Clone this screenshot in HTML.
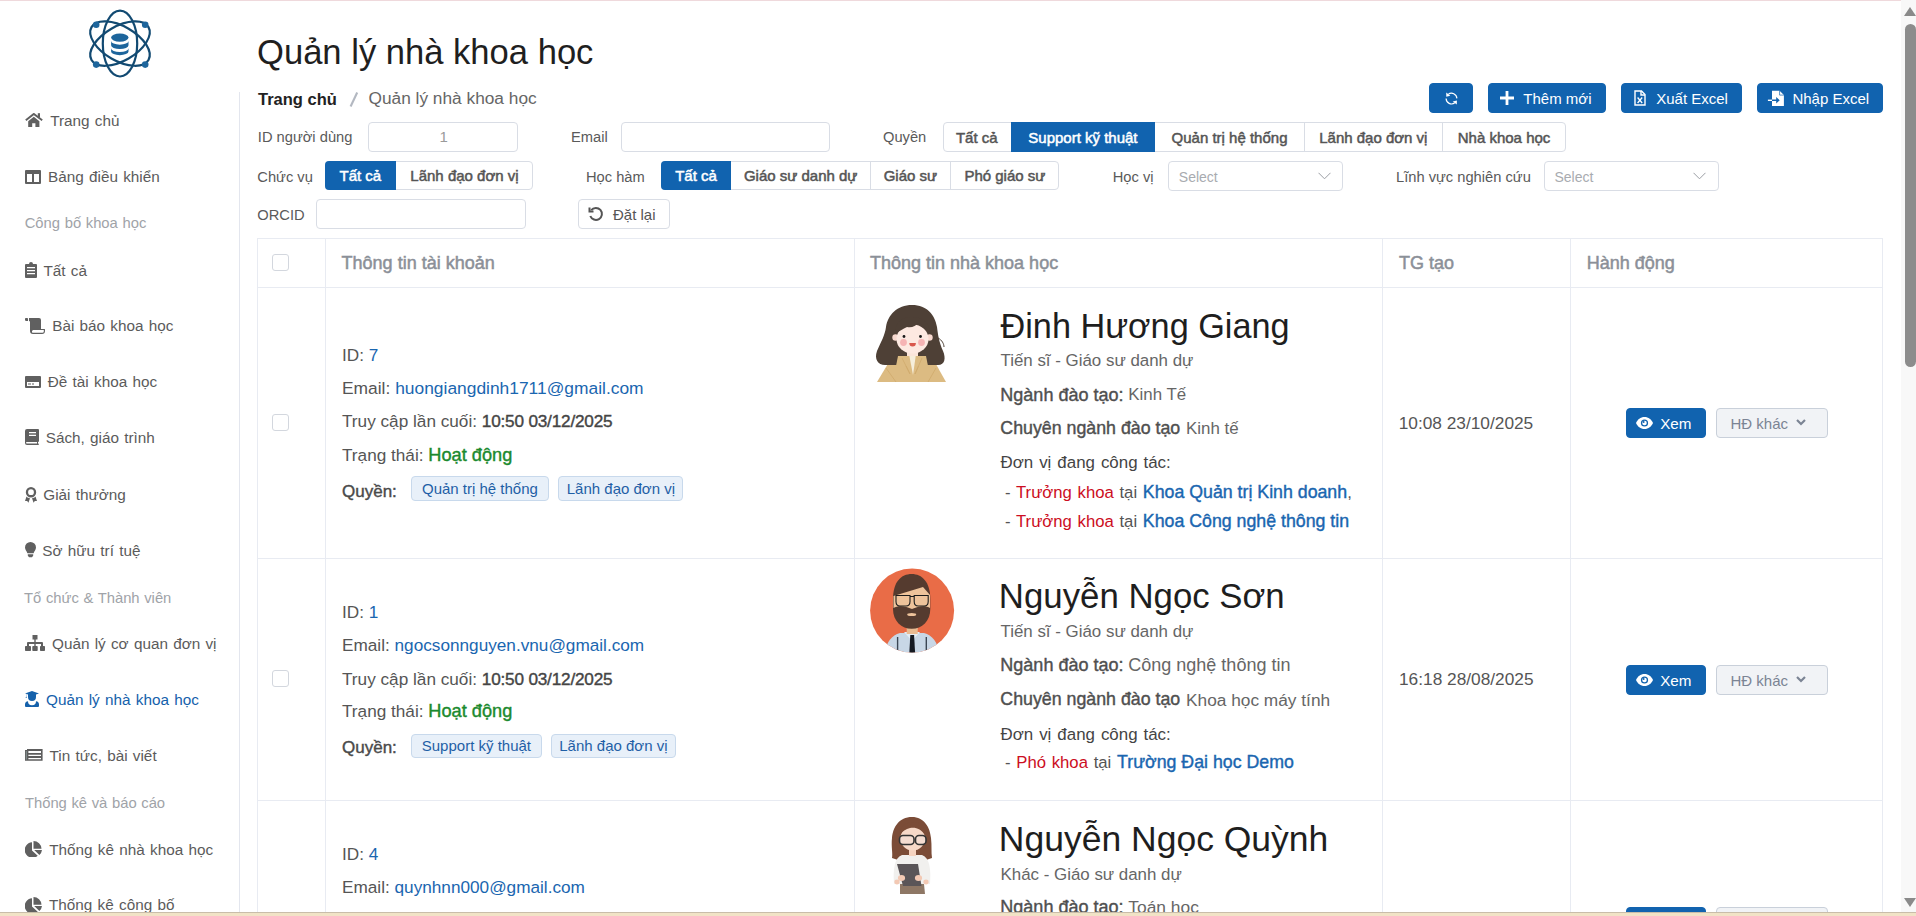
<!DOCTYPE html>
<html><head><meta charset="utf-8"><title>Quản lý nhà khoa học</title>
<style>
html,body{margin:0;padding:0;background:#fff;overflow:hidden}
body{width:1916px;height:916px;position:relative;font-family:"Liberation Sans",sans-serif}
.t{position:absolute;line-height:1;white-space:nowrap}
b{font-weight:700}
</style></head><body>
<div style="position:absolute;left:0px;top:0px;width:1916px;height:1px;background:#efd9dc"></div>
<div style="position:absolute;left:239px;top:92px;width:1px;height:820px;background:#e3e6ee"></div>
<svg style="position:absolute;left:80px;top:3px" width="80" height="82" viewBox="0 0 80 82">
<g fill="none" stroke="#124a72" stroke-width="2.2" transform="translate(40,40.6)">
<ellipse rx="17.2" ry="32.9"/>
<ellipse rx="17.2" ry="32.9" transform="rotate(60)"/>
<ellipse rx="17.2" ry="32.9" transform="rotate(-60)"/>
</g>
<g fill="#1d659c">
<circle cx="16.2" cy="21.8" r="3.3"/><circle cx="65.2" cy="21.8" r="3.3"/>
<circle cx="16.2" cy="61.6" r="3.3"/><circle cx="65.2" cy="61.6" r="3.3"/>
<ellipse cx="39.8" cy="34.6" rx="8.7" ry="4.2"/>
<path d="M31.1 37.9 v4.4 a8.7 3.8 0 0 0 17.4 0 v-4.4 a8.7 3.8 0 0 1 -17.4 0z"/>
<path d="M31.1 45.2 v3.2 a8.7 3.8 0 0 0 17.4 0 v-3.2 a8.7 3.8 0 0 1 -17.4 0z"/>
</g></svg>
<svg style="position:absolute;left:25px;top:113px" width="18" height="15" viewBox="0 0 18 15"><path d="M0.8 7.2L8.8 0.9L17.2 7.2" fill="none" stroke="#606060" stroke-width="1.9"/><rect x="12.8" y="0.2" width="2.2" height="4.2" fill="#606060"/><path d="M3.2 8.2L8.8 3.8L14.4 8.2V14H10.4V10.2H7.2V14H3.2z" fill="#606060"/></svg>
<svg style="position:absolute;left:25px;top:170px" width="16" height="14" viewBox="0 0 16 14" fill="#606060"><path d="M1 0h14a1 1 0 0 1 1 1v12a1 1 0 0 1-1 1H1a1 1 0 0 1-1-1V1a1 1 0 0 1 1-1zM2 4v8h5V4zM9 4v8h5V4z"/></svg>
<svg style="position:absolute;left:25px;top:262px" width="12" height="16" viewBox="0 0 12 16" fill="#606060"><path d="M1 2h3a2 2 0 0 1 4 0h3a1 1 0 0 1 1 1v12a1 1 0 0 1-1 1H1a1 1 0 0 1-1-1V3a1 1 0 0 1 1-1zM2 5v1.3h8V5zM2 8v1.3h8V8zM2 11v1.3h8V11z"/></svg>
<svg style="position:absolute;left:25px;top:318px" width="20" height="16" viewBox="0 0 20 16" fill="#606060"><path d="M0 1.2a1.5 1.5 0 0 1 3 0V3H1.5A1.5 1.5 0 0 1 0 1.2zM4 0h10a2 2 0 0 1 2 2v9h3.5a.5.5 0 0 1 .5.5V13a3 3 0 0 1-3 3H8a3 3 0 0 1-3-3V3.5L4 3zM7 13v1.3c.4.4.8.5 1.2.5h9.3a1.6 1.6 0 0 0 1.3-1.3V12H8z"/></svg>
<svg style="position:absolute;left:25px;top:376px" width="16" height="12" viewBox="0 0 16 12" fill="#606060"><path d="M1 0h14a1 1 0 0 1 1 1v10a1 1 0 0 1-1 1H1a1 1 0 0 1-1-1V1a1 1 0 0 1 1-1zM2 6v4h12V6zM3 7.5h3v1H3zM7 7.5h2v1H7z"/></svg>
<svg style="position:absolute;left:25px;top:429px" width="14" height="16" viewBox="0 0 14 16" fill="#606060"><path d="M2 0h11a1 1 0 0 1 1 1v11a1 1 0 0 1-1 1v1.5h.2a.5.5 0 0 1 0 1.5H2a2 2 0 0 1-2-2V2a2 2 0 0 1 2-2zM1.8 13a.8.8 0 0 0 0 1.6H12V13zM4 3v1.3h7V3zM4 5.8v1.3h7V5.8z"/></svg>
<svg style="position:absolute;left:25px;top:487px" width="12" height="16" viewBox="0 0 12 16" fill="#606060"><path d="M6 0a5.2 5.2 0 1 1 0 10.4A5.2 5.2 0 0 1 6 0zm0 2.3a2.9 2.9 0 1 0 0 5.8a2.9 2.9 0 0 0 0-5.8zM1.5 9.5L0 14h2.2l1.2 1.8L5 11.3c-1.5-.2-2.7-.9-3.5-1.8zM10.5 9.5L12 14H9.8l-1.2 1.8L7 11.3c1.5-.2 2.7-.9 3.5-1.8z"/></svg>
<svg style="position:absolute;left:25px;top:542px" width="11" height="16" viewBox="0 0 11 16" fill="#606060"><path d="M5.5 0A5.5 5.5 0 0 1 11 5.5c0 2.4-1.8 3.7-2.4 5.7H2.4C1.8 9.2 0 7.9 0 5.5A5.5 5.5 0 0 1 5.5 0zM2.8 12.2h5.4v1.3a.8.8 0 0 1-.3.6l-.7.8c-.2.2-.4.3-.7.3H4.5c-.3 0-.5-.1-.7-.3l-.7-.8a.8.8 0 0 1-.3-.6z"/></svg>
<svg style="position:absolute;left:25px;top:635px" width="20" height="16" viewBox="0 0 20 16" fill="#606060"><path d="M7.5 0h5v4.5h-1.8V7H17a1 1 0 0 1 1 1v3h1.2a.8.8 0 0 1 .8.8v3.4a.8.8 0 0 1-.8.8h-3.4a.8.8 0 0 1-.8-.8v-3.4a.8.8 0 0 1 .8-.8H16V9h-5.3v2h1.2a.8.8 0 0 1 .8.8v3.4a.8.8 0 0 1-.8.8H8.1a.8.8 0 0 1-.8-.8v-3.4a.8.8 0 0 1 .8-.8h1.2V9H4v2h1.2a.8.8 0 0 1 .8.8v3.4a.8.8 0 0 1-.8.8H.8a.8.8 0 0 1-.8-.8v-3.4a.8.8 0 0 1 .8-.8H2V8a1 1 0 0 1 1-1h6.3V4.5H7.5z"/></svg>
<svg style="position:absolute;left:25px;top:691px" width="14" height="16" viewBox="0 0 14 16" fill="#1561ab"><path d="M7 0l7 2.4-3 1V6a4 4 0 0 1-8 0V3.4L1.3 2.8v2.8l.5 1.4H.6l.5-1.4V2.7L0 2.4zM3 10.2a3.3 3.3 0 0 0 8 0A3.4 3.4 0 0 1 14 13.6V15a1 1 0 0 1-1 1H1a1 1 0 0 1-1-1v-1.4a3.4 3.4 0 0 1 3-3.4z"/></svg>
<svg style="position:absolute;left:25px;top:749px" width="18" height="12" viewBox="0 0 18 12"><path d="M2 0H17.6V11.8H0V1H2z" fill="#5e5e5e"/><path d="M3.4 2.1H16V3.9H3.4zM3.4 5.8H16V7.1H3.4zM3.4 8.9H16V10.2H3.4z" fill="#fff"/><path d="M1.3 2V10.6" stroke="#9aa" stroke-width="0.7"/></svg>
<svg style="position:absolute;left:25px;top:841px" width="17" height="16" viewBox="0 0 17 16" fill="#606060"><path d="M7 1.2v8.3l5.7 5.3A7.8 7.8 0 1 1 7 1.2zM8.5 0A8 8 0 0 1 16.5 7.7H8.5zM9.2 9h7.8a8 8 0 0 1-2.6 5z"/></svg>
<svg style="position:absolute;left:25px;top:897px" width="17" height="16" viewBox="0 0 17 16" fill="#606060"><path d="M7 1.2v8.3l5.7 5.3A7.8 7.8 0 1 1 7 1.2zM8.5 0A8 8 0 0 1 16.5 7.7H8.5zM9.2 9h7.8a8 8 0 0 1-2.6 5z"/></svg>
<div class="t" style="left:50.2px;top:113.35px;font-size:15.3px;color:#5b5b5b;font-weight:400;word-spacing:1px;">Trang chủ</div>
<div class="t" style="left:48.0px;top:168.75px;font-size:15.3px;color:#5b5b5b;font-weight:400;word-spacing:1px;">Bảng điều khiển</div>
<div class="t" style="left:43.5px;top:262.75px;font-size:15.3px;color:#5b5b5b;font-weight:400;word-spacing:1px;">Tất cả</div>
<div class="t" style="left:52.2px;top:318.45px;font-size:15.3px;color:#5b5b5b;font-weight:400;word-spacing:1px;">Bài báo khoa học</div>
<div class="t" style="left:47.8px;top:374.05px;font-size:15.3px;color:#5b5b5b;font-weight:400;word-spacing:1px;">Đề tài khoa học</div>
<div class="t" style="left:45.7px;top:429.85px;font-size:15.3px;color:#5b5b5b;font-weight:400;word-spacing:1px;">Sách, giáo trình</div>
<div class="t" style="left:43.3px;top:486.95px;font-size:15.3px;color:#5b5b5b;font-weight:400;word-spacing:1px;">Giải thưởng</div>
<div class="t" style="left:42.3px;top:542.75px;font-size:15.3px;color:#5b5b5b;font-weight:400;word-spacing:1px;">Sở hữu trí tuệ</div>
<div class="t" style="left:52.0px;top:636.25px;font-size:15.3px;color:#5b5b5b;font-weight:400;word-spacing:1px;">Quản lý cơ quan đơn vị</div>
<div class="t" style="left:49.6px;top:747.75px;font-size:15.3px;color:#5b5b5b;font-weight:400;word-spacing:1px;">Tin tức, bài viết</div>
<div class="t" style="left:49.2px;top:841.65px;font-size:15.3px;color:#5b5b5b;font-weight:400;word-spacing:1px;">Thống kê nhà khoa học</div>
<div class="t" style="left:49.0px;top:897.05px;font-size:15.3px;color:#5b5b5b;font-weight:400;word-spacing:1px;">Thống kê công bố</div>
<div class="t" style="left:46.0px;top:692.05px;font-size:15.3px;color:#1561ab;font-weight:400;word-spacing:1px;">Quản lý nhà khoa học</div>
<div class="t" style="left:24.7px;top:216.07px;font-size:14.8px;color:#a0a3a8;font-weight:400;word-spacing:0.5px;">Công bố khoa học</div>
<div class="t" style="left:24.0px;top:591.07px;font-size:14.8px;color:#a0a3a8;font-weight:400;word-spacing:0.5px;">Tổ chức &amp; Thành viên</div>
<div class="t" style="left:24.9px;top:795.97px;font-size:14.8px;color:#a0a3a8;font-weight:400;word-spacing:0.5px;">Thống kê và báo cáo</div>
<div class="t" style="left:257.0px;top:35.31px;font-size:34.6px;color:#1f1f1f;font-weight:400;">Quản lý nhà khoa học</div>
<div class="t" style="left:258.0px;top:91.03px;font-size:16.5px;color:#222;font-weight:700;">Trang chủ</div>
<svg style="position:absolute;left:348px;top:91px" width="11" height="17" viewBox="0 0 11 17"><path d="M9.2 1.5L2.6 15.5" stroke="#b3b8c1" stroke-width="2.1" stroke-linecap="butt"/></svg>
<div class="t" style="left:368.5px;top:90.36px;font-size:17.3px;color:#666;font-weight:400;">Quản lý nhà khoa học</div>
<div style="position:absolute;left:1429px;top:83px;width:44px;height:30px;background:#1163af;border:1px solid #1163af;box-sizing:border-box;border-radius:4px"></div>
<svg style="position:absolute;left:1436px;top:86px" width="30" height="24" viewBox="0 0 30 24"><g fill="none" stroke="#fff" stroke-width="1.2"><path d="M12.2 8.4A5.4 5.4 0 0 1 20.9 12.4"/><path d="M10.1 12.6A5.4 5.4 0 0 0 18.8 16.8"/></g><g fill="#fff"><path d="M10.2 6.6L14.3 9.8L10.3 10.8z"/><path d="M20.8 18.6L16.7 15.4L20.9 14.4z"/></g></svg>
<div style="position:absolute;left:1488px;top:83px;width:118px;height:30px;background:#1163af;border:1px solid #1163af;box-sizing:border-box;border-radius:4px"></div>
<svg style="position:absolute;left:1500px;top:91px" width="14" height="14" viewBox="0 0 14 14" fill="#fff"><path d="M5.6 0h2.8v5.6H14v2.8H8.4V14H5.6V8.4H0V5.6h5.6z"/></svg>
<div class="t" style="left:1523.3px;top:91.40px;font-size:15px;color:#fff;font-weight:400;font-family:"Liberation Sans",sans-serif;">Thêm mới</div>
<div style="position:absolute;left:1621px;top:83px;width:121px;height:30px;background:#1163af;border:1px solid #1163af;box-sizing:border-box;border-radius:4px"></div>
<svg style="position:absolute;left:1634px;top:90px" width="12" height="16" viewBox="0 0 12 16" fill="none" stroke="#fff" stroke-width="1.4"><path d="M1 1h6.5L11 4.5V15H1z"/><path d="M7 1v4h4"/><path d="M3.6 7.5l4.6 5.5M8.2 7.5l-4.6 5.5" stroke-width="1.3"/></svg>
<div class="t" style="left:1656.2px;top:91.40px;font-size:15px;color:#fff;font-weight:400;">Xuất Excel</div>
<div style="position:absolute;left:1757px;top:83px;width:126px;height:30px;background:#1163af;border:1px solid #1163af;box-sizing:border-box;border-radius:4px"></div>
<svg style="position:absolute;left:1764px;top:86px" width="26" height="24" viewBox="0 0 26 24"><path d="M8 4.7h7.6l4.3 4.3V19.9H8z" fill="#fff"/><path d="M15.6 4.7V9.1H19.9" fill="none" stroke="#1163af" stroke-width="0.7"/><path d="M8 13.6h4.2V11l3.5 3.3-3.5 3.3v-2.6H8z" fill="#1163af"/><path d="M3.9 13.6h4.1v1.4H3.9z" fill="#fff"/></svg>
<div class="t" style="left:1792.4px;top:91.40px;font-size:15px;color:#fff;font-weight:400;">Nhập Excel</div>
<div class="t" style="left:257.8px;top:130.36px;font-size:14.7px;color:#5a5a5a;font-weight:400;">ID người dùng</div>
<div style="position:absolute;left:368px;top:122px;width:150px;height:30px;background:#fff;border:1px solid #d9dde5;box-sizing:border-box;border-radius:4px"></div>
<div class="t" style="left:439.5px;top:129.30px;font-size:15px;color:#9a9a9a;font-weight:400;">1</div>
<div class="t" style="left:571.0px;top:130.36px;font-size:14.7px;color:#5a5a5a;font-weight:400;">Email</div>
<div style="position:absolute;left:621px;top:122px;width:209px;height:30px;background:#fff;border:1px solid #d9dde5;box-sizing:border-box;border-radius:4px"></div>
<div class="t" style="left:883.0px;top:130.36px;font-size:14.7px;color:#5a5a5a;font-weight:400;">Quyền</div>
<div style="position:absolute;left:942.5px;top:122px;width:623.2px;height:30px;background:#fff;border:1px solid #d9dde5;box-sizing:border-box;border-radius:4px"></div>
<div class="t" style="left:942.5px;width:68.5px;text-align:center;top:129.50px;font-size:15px;font-weight:400;-webkit-text-stroke:0.5px #555;color:#555">Tất cả</div>
<div style="position:absolute;left:1011px;top:122px;width:143.79999999999995px;height:30px;background:#1163af;"></div>
<div class="t" style="left:1011px;width:143.79999999999995px;text-align:center;top:129.50px;font-size:15px;font-weight:400;-webkit-text-stroke:0.5px #fff;color:#fff">Support kỹ thuật</div>
<div class="t" style="left:1154.8px;width:149.5px;text-align:center;top:129.50px;font-size:15px;font-weight:400;-webkit-text-stroke:0.5px #555;color:#555">Quản trị hệ thống</div>
<div style="position:absolute;left:1304.3px;top:123px;width:1px;height:28px;background:#d9dde5"></div>
<div class="t" style="left:1304.3px;width:138.10000000000014px;text-align:center;top:129.50px;font-size:15px;font-weight:400;-webkit-text-stroke:0.5px #555;color:#555">Lãnh đạo đơn vị</div>
<div style="position:absolute;left:1442.4px;top:123px;width:1px;height:28px;background:#d9dde5"></div>
<div class="t" style="left:1442.4px;width:123.29999999999995px;text-align:center;top:129.50px;font-size:15px;font-weight:400;-webkit-text-stroke:0.5px #555;color:#555">Nhà khoa học</div>
<div class="t" style="left:257.3px;top:170.16px;font-size:14.7px;color:#5a5a5a;font-weight:400;">Chức vụ</div>
<div style="position:absolute;left:325px;top:161px;width:208.29999999999995px;height:29px;background:#fff;border:1px solid #d9dde5;box-sizing:border-box;border-radius:4px"></div>
<div style="position:absolute;left:325px;top:161px;width:70.69999999999999px;height:29px;background:#1163af;border-radius:4px 0 0 4px;"></div>
<div class="t" style="left:325px;width:70.69999999999999px;text-align:center;top:168.00px;font-size:15px;font-weight:400;-webkit-text-stroke:0.5px #fff;color:#fff">Tất cả</div>
<div class="t" style="left:395.7px;width:137.59999999999997px;text-align:center;top:168.00px;font-size:15px;font-weight:400;-webkit-text-stroke:0.5px #555;color:#555">Lãnh đạo đơn vị</div>
<div class="t" style="left:586.0px;top:170.16px;font-size:14.7px;color:#5a5a5a;font-weight:400;">Học hàm</div>
<div style="position:absolute;left:661.2px;top:161px;width:398.20000000000005px;height:29px;background:#fff;border:1px solid #d9dde5;box-sizing:border-box;border-radius:4px"></div>
<div style="position:absolute;left:661.2px;top:161px;width:69.69999999999993px;height:29px;background:#1163af;border-radius:4px 0 0 4px;"></div>
<div class="t" style="left:661.2px;width:69.69999999999993px;text-align:center;top:168.00px;font-size:15px;font-weight:400;-webkit-text-stroke:0.5px #fff;color:#fff">Tất cả</div>
<div class="t" style="left:730.9px;width:139.5px;text-align:center;top:168.00px;font-size:15px;font-weight:400;-webkit-text-stroke:0.5px #555;color:#555">Giáo sư danh dự</div>
<div style="position:absolute;left:870.4px;top:162px;width:1px;height:27px;background:#d9dde5"></div>
<div class="t" style="left:870.4px;width:79.89999999999998px;text-align:center;top:168.00px;font-size:15px;font-weight:400;-webkit-text-stroke:0.5px #555;color:#555">Giáo sư</div>
<div style="position:absolute;left:950.3px;top:162px;width:1px;height:27px;background:#d9dde5"></div>
<div class="t" style="left:950.3px;width:109.10000000000014px;text-align:center;top:168.00px;font-size:15px;font-weight:400;-webkit-text-stroke:0.5px #555;color:#555">Phó giáo sư</div>
<div class="t" style="left:1112.7px;top:170.16px;font-size:14.7px;color:#5a5a5a;font-weight:400;">Học vị</div>
<div style="position:absolute;left:1168px;top:161px;width:175px;height:30px;background:#fff;border:1px solid #d9dde5;box-sizing:border-box;border-radius:4px"></div>
<div class="t" style="left:1178.8px;top:169.65px;font-size:14px;color:#a8abb0;font-weight:400;">Select</div>
<svg style="position:absolute;left:1318px;top:172px" width="13" height="8" viewBox="0 0 13 8" fill="none" stroke="#9a9da3" stroke-width="1"><path d="M.5.8l6 6 6-6"/></svg>
<div class="t" style="left:1396.0px;top:170.16px;font-size:14.7px;color:#5a5a5a;font-weight:400;">Lĩnh vực nghiên cứu</div>
<div style="position:absolute;left:1544px;top:161px;width:175px;height:30px;background:#fff;border:1px solid #d9dde5;box-sizing:border-box;border-radius:4px"></div>
<div class="t" style="left:1554.4px;top:169.65px;font-size:14px;color:#a8abb0;font-weight:400;">Select</div>
<svg style="position:absolute;left:1693px;top:172px" width="13" height="8" viewBox="0 0 13 8" fill="none" stroke="#9a9da3" stroke-width="1"><path d="M.5.8l6 6 6-6"/></svg>
<div class="t" style="left:257.3px;top:207.76px;font-size:14.7px;color:#5a5a5a;font-weight:400;">ORCID</div>
<div style="position:absolute;left:316px;top:199px;width:210px;height:30px;background:#fff;border:1px solid #d9dde5;box-sizing:border-box;border-radius:4px"></div>
<div style="position:absolute;left:578px;top:199px;width:92px;height:30px;background:#fff;border:1px solid #d9dde5;box-sizing:border-box;border-radius:4px"></div>
<svg style="position:absolute;left:588px;top:206px" width="16" height="16" viewBox="0 0 16 16" fill="none" stroke="#555" stroke-width="2"><path d="M3.2 4.2A6 6 0 1 1 2.3 10"/><path d="M1.5 1.5v4h4" stroke-linejoin="miter"/></svg>
<div class="t" style="left:613.0px;top:207.20px;font-size:15px;color:#555;font-weight:400;">Đặt lại</div>
<div style="position:absolute;left:257px;top:238px;width:1626px;height:674px;border:1px solid #e8ebf2;border-bottom:none;box-sizing:border-box"></div>
<div style="position:absolute;left:257px;top:287px;width:1626px;height:1px;background:#e8ebf2"></div>
<div style="position:absolute;left:257px;top:558px;width:1626px;height:1px;background:#e8ebf2"></div>
<div style="position:absolute;left:257px;top:800px;width:1626px;height:1px;background:#e8ebf2"></div>
<div style="position:absolute;left:325px;top:238px;width:1px;height:674px;background:#e8ebf2"></div>
<div style="position:absolute;left:854px;top:238px;width:1px;height:674px;background:#e8ebf2"></div>
<div style="position:absolute;left:1382px;top:238px;width:1px;height:674px;background:#e8ebf2"></div>
<div style="position:absolute;left:1570px;top:238px;width:1px;height:674px;background:#e8ebf2"></div>
<div class="t" style="left:341.6px;top:253.56px;font-size:18px;color:#8b9098;font-weight:400;-webkit-text-stroke:0.5px currentColor;">Thông tin tài khoản</div>
<div class="t" style="left:870.0px;top:253.56px;font-size:18px;color:#8b9098;font-weight:400;-webkit-text-stroke:0.5px currentColor;">Thông tin nhà khoa học</div>
<div class="t" style="left:1399.0px;top:253.56px;font-size:18px;color:#8b9098;font-weight:400;-webkit-text-stroke:0.5px currentColor;">TG tạo</div>
<div class="t" style="left:1586.8px;top:253.56px;font-size:18px;color:#8b9098;font-weight:400;-webkit-text-stroke:0.5px currentColor;">Hành động</div>
<div style="position:absolute;left:272px;top:254px;width:17px;height:17px;border:1px solid #d3d7de;border-radius:3px;box-sizing:border-box;background:#fff"></div>
<div class="t" style="left:342.0px;top:347.44px;font-size:17.2px;color:#555;font-weight:400;">ID: <span style="color:#1a66b0">7</span></div>
<div class="t" style="left:342.0px;top:380.27px;font-size:17.4px;color:#555;font-weight:400;">Email: <span style="color:#1a66b0">huongiangdinh1711@gmail.com</span></div>
<div class="t" style="left:342.0px;top:412.64px;font-size:17.2px;color:#555;font-weight:400;">Truy cập lần cuối: <span style="color:#454545;letter-spacing:-0.2px;line-height:0;-webkit-text-stroke:0.4px #454545">10:50 03/12/2025</span></div>
<div class="t" style="left:342.0px;top:447.04px;font-size:17.2px;color:#555;font-weight:400;">Trạng thái: <span style="color:#1b8a2e;font-size:18.2px;line-height:0;-webkit-text-stroke:0.4px #1b8a2e">Hoạt động</span></div>
<div class="t" style="left:342.0px;top:482.81px;font-size:17px;color:#4a4a4a;font-weight:400;-webkit-text-stroke:0.4px #4a4a4a;">Quyền:</div>
<div style="position:absolute;left:411.3px;top:476.4px;width:137.3px;height:24.2px;background:#e8f0f9;border:1px solid #c8d9ec;border-radius:4px;box-sizing:border-box"></div>
<div class="t" style="left:411.3px;width:137.3px;text-align:center;top:481.10px;font-size:15px;color:#1f5fa6">Quản trị hệ thống</div>
<div style="position:absolute;left:558.3px;top:476.4px;width:125.20000000000005px;height:24.2px;background:#e8f0f9;border:1px solid #c8d9ec;border-radius:4px;box-sizing:border-box"></div>
<div class="t" style="left:558.3px;width:125.20000000000005px;text-align:center;top:481.10px;font-size:15px;color:#1f5fa6">Lãnh đạo đơn vị</div>
<div style="position:absolute;left:272px;top:414px;width:17px;height:17px;border:1px solid #d3d7de;border-radius:3px;box-sizing:border-box;background:#fff"></div>
<div class="t" style="left:342.0px;top:603.94px;font-size:17.2px;color:#555;font-weight:400;">ID: <span style="color:#1a66b0">1</span></div>
<div class="t" style="left:342.0px;top:637.44px;font-size:17.2px;color:#555;font-weight:400;">Email: <span style="color:#1a66b0">ngocsonnguyen.vnu@gmail.com</span></div>
<div class="t" style="left:342.0px;top:670.74px;font-size:17.2px;color:#555;font-weight:400;">Truy cập lần cuối: <span style="color:#454545;letter-spacing:-0.2px;line-height:0;-webkit-text-stroke:0.4px #454545">10:50 03/12/2025</span></div>
<div class="t" style="left:342.0px;top:703.14px;font-size:17.2px;color:#555;font-weight:400;">Trạng thái: <span style="color:#1b8a2e;font-size:18.2px;line-height:0;-webkit-text-stroke:0.4px #1b8a2e">Hoạt động</span></div>
<div class="t" style="left:342.0px;top:738.71px;font-size:17px;color:#4a4a4a;font-weight:400;-webkit-text-stroke:0.4px #4a4a4a;">Quyền:</div>
<div style="position:absolute;left:411.2px;top:733.5px;width:130.40000000000003px;height:24.2px;background:#e8f0f9;border:1px solid #c8d9ec;border-radius:4px;box-sizing:border-box"></div>
<div class="t" style="left:411.2px;width:130.40000000000003px;text-align:center;top:738.20px;font-size:15px;color:#1f5fa6">Support kỹ thuật</div>
<div style="position:absolute;left:551px;top:733.5px;width:124.79999999999995px;height:24.2px;background:#e8f0f9;border:1px solid #c8d9ec;border-radius:4px;box-sizing:border-box"></div>
<div class="t" style="left:551px;width:124.79999999999995px;text-align:center;top:738.20px;font-size:15px;color:#1f5fa6">Lãnh đạo đơn vị</div>
<div style="position:absolute;left:272px;top:670px;width:17px;height:17px;border:1px solid #d3d7de;border-radius:3px;box-sizing:border-box;background:#fff"></div>
<div class="t" style="left:342.0px;top:845.94px;font-size:17.2px;color:#555;font-weight:400;">ID: <span style="color:#1a66b0">4</span></div>
<div class="t" style="left:342.0px;top:879.44px;font-size:17.2px;color:#555;font-weight:400;">Email: <span style="color:#1a66b0">quynhnn000@gmail.com</span></div>
<div class="t" style="left:1000.5px;top:309.41px;font-size:34.25px;color:#1e1e1e;font-weight:400;">Đinh Hương Giang</div>
<div class="t" style="left:1000.5px;top:353.39px;font-size:16.9px;color:#666;font-weight:400;">Tiến sĩ - Giáo sư danh dự</div>
<div class="t" style="left:1000.3px;top:385.92px;font-size:18.05px;color:#4f4f4f;font-weight:400;-webkit-text-stroke:0.4px #4f4f4f;">Ngành đào tạo:</div>
<div class="t" style="left:1128.3px;top:386.89px;font-size:16.9px;color:#666;font-weight:400;">Kinh Tế</div>
<div class="t" style="left:1000.3px;top:419.83px;font-size:17.8px;color:#4f4f4f;font-weight:400;-webkit-text-stroke:0.4px #4f4f4f;">Chuyên ngành đào tạo</div>
<div class="t" style="left:1186.0px;top:420.59px;font-size:16.9px;color:#666;font-weight:400;">Kinh tế</div>
<div class="t" style="left:1000.5px;top:455.39px;font-size:16.9px;color:#444;font-weight:400;word-spacing:1.3px;">Đơn vị đang công tác:</div>
<div class="t" style="left:1005.0px;top:484.86px;font-size:16.7px;color:#555;font-weight:400;word-spacing:1.1px;">- <span style="color:#cc0d22">Trưởng khoa</span> tại <span style="color:#1a66b0;word-spacing:0;font-size:17.75px;line-height:0;-webkit-text-stroke:0.4px #1a66b0">Khoa Quản trị Kinh doanh</span>,</div>
<div class="t" style="left:1005.0px;top:513.56px;font-size:16.7px;color:#555;font-weight:400;word-spacing:1.1px;">- <span style="color:#cc0d22">Trưởng khoa</span> tại <span style="color:#1a66b0;word-spacing:0;font-size:17.75px;line-height:0;-webkit-text-stroke:0.4px #1a66b0">Khoa Công nghệ thông tin</span></div>
<div class="t" style="left:998.8px;top:578.94px;font-size:34.8px;color:#1e1e1e;font-weight:400;">Nguyễn Ngọc Sơn</div>
<div class="t" style="left:1000.5px;top:624.39px;font-size:16.9px;color:#666;font-weight:400;">Tiến sĩ - Giáo sư danh dự</div>
<div class="t" style="left:1000.3px;top:656.42px;font-size:18.05px;color:#4f4f4f;font-weight:400;-webkit-text-stroke:0.4px #4f4f4f;">Ngành đào tạo:</div>
<div class="t" style="left:1128.3px;top:656.46px;font-size:18.0px;color:#666;font-weight:400;">Công nghệ thông tin</div>
<div class="t" style="left:1000.3px;top:691.13px;font-size:17.8px;color:#4f4f4f;font-weight:400;-webkit-text-stroke:0.4px #4f4f4f;">Chuyên ngành đào tạo</div>
<div class="t" style="left:1186.0px;top:691.56px;font-size:17.3px;color:#666;font-weight:400;">Khoa học máy tính</div>
<div class="t" style="left:1000.5px;top:726.59px;font-size:16.9px;color:#444;font-weight:400;word-spacing:1.3px;">Đơn vị đang công tác:</div>
<div class="t" style="left:1005.0px;top:755.16px;font-size:16.7px;color:#555;font-weight:400;word-spacing:1.1px;">- <span style="color:#cc0d22">Phó khoa</span> tại <span style="color:#1a66b0;word-spacing:0;font-size:17.75px;line-height:0;-webkit-text-stroke:0.4px #1a66b0">Trường Đại học Demo</span></div>
<div class="t" style="left:998.8px;top:821.55px;font-size:35.5px;color:#1e1e1e;font-weight:400;">Nguyễn Ngọc Quỳnh</div>
<div class="t" style="left:1000.5px;top:866.69px;font-size:16.9px;color:#666;font-weight:400;">Khác - Giáo sư danh dự</div>
<div class="t" style="left:1000.3px;top:898.22px;font-size:18.05px;color:#4f4f4f;font-weight:400;-webkit-text-stroke:0.4px #4f4f4f;">Ngành đào tạo:</div>
<div class="t" style="left:1128.3px;top:898.77px;font-size:17.4px;color:#666;font-weight:400;">Toán học</div>
<div class="t" style="left:1398.7px;top:414.66px;font-size:17.3px;color:#555;font-weight:400;">10:08 23/10/2025</div>
<div class="t" style="left:1399.0px;top:670.86px;font-size:17.3px;color:#555;font-weight:400;">16:18 28/08/2025</div>
<div style="position:absolute;left:1626px;top:408px;width:80px;height:30px;background:#1163af;border:1px solid #1163af;box-sizing:border-box;border-radius:4px"></div>
<svg style="position:absolute;left:1636px;top:417px" width="17" height="12" viewBox="0 0 17 12"><path d="M8.5 0C4.6 0 1.4 2.6 0 6c1.4 3.4 4.6 6 8.5 6S15.6 9.4 17 6C15.6 2.6 12.4 0 8.5 0z" fill="#fff"/><circle cx="8.5" cy="6" r="3.6" fill="#1163af"/><circle cx="8.5" cy="6" r="2.3" fill="#fff"/><circle cx="7.6" cy="5" r="1" fill="#1163af"/></svg>
<div class="t" style="left:1660.2px;top:415.93px;font-size:15.2px;color:#fff;font-weight:400;">Xem</div>
<div style="position:absolute;left:1716px;top:408px;width:112px;height:30px;background:#f1f3f6;border:1px solid #c9d0da;box-sizing:border-box;border-radius:4px"></div>
<div class="t" style="left:1730.5px;top:415.60px;font-size:15px;color:#7b8494;font-weight:400;">HĐ khác</div>
<svg style="position:absolute;left:1796px;top:419px" width="10" height="7" viewBox="0 0 10 7" fill="none" stroke="#7b8494" stroke-width="2.2"><path d="M1 1l4 4 4-4"/></svg>
<div style="position:absolute;left:1626px;top:665px;width:80px;height:30px;background:#1163af;border:1px solid #1163af;box-sizing:border-box;border-radius:4px"></div>
<svg style="position:absolute;left:1636px;top:674px" width="17" height="12" viewBox="0 0 17 12"><path d="M8.5 0C4.6 0 1.4 2.6 0 6c1.4 3.4 4.6 6 8.5 6S15.6 9.4 17 6C15.6 2.6 12.4 0 8.5 0z" fill="#fff"/><circle cx="8.5" cy="6" r="3.6" fill="#1163af"/><circle cx="8.5" cy="6" r="2.3" fill="#fff"/><circle cx="7.6" cy="5" r="1" fill="#1163af"/></svg>
<div class="t" style="left:1660.2px;top:672.93px;font-size:15.2px;color:#fff;font-weight:400;">Xem</div>
<div style="position:absolute;left:1716px;top:665px;width:112px;height:30px;background:#f1f3f6;border:1px solid #c9d0da;box-sizing:border-box;border-radius:4px"></div>
<div class="t" style="left:1730.5px;top:672.60px;font-size:15px;color:#7b8494;font-weight:400;">HĐ khác</div>
<svg style="position:absolute;left:1796px;top:676px" width="10" height="7" viewBox="0 0 10 7" fill="none" stroke="#7b8494" stroke-width="2.2"><path d="M1 1l4 4 4-4"/></svg>
<div style="position:absolute;left:1626px;top:907px;width:80px;height:30px;background:#1163af;border:1px solid #1163af;box-sizing:border-box;border-radius:4px"></div>
<svg style="position:absolute;left:1636px;top:916px" width="17" height="12" viewBox="0 0 17 12"><path d="M8.5 0C4.6 0 1.4 2.6 0 6c1.4 3.4 4.6 6 8.5 6S15.6 9.4 17 6C15.6 2.6 12.4 0 8.5 0z" fill="#fff"/><circle cx="8.5" cy="6" r="3.6" fill="#1163af"/><circle cx="8.5" cy="6" r="2.3" fill="#fff"/><circle cx="7.6" cy="5" r="1" fill="#1163af"/></svg>
<div class="t" style="left:1660.2px;top:914.93px;font-size:15.2px;color:#fff;font-weight:400;">Xem</div>
<div style="position:absolute;left:1716px;top:907px;width:112px;height:30px;background:#f1f3f6;border:1px solid #c9d0da;box-sizing:border-box;border-radius:4px"></div>
<div class="t" style="left:1730.5px;top:914.60px;font-size:15px;color:#7b8494;font-weight:400;">HĐ khác</div>
<svg style="position:absolute;left:1796px;top:918px" width="10" height="7" viewBox="0 0 10 7" fill="none" stroke="#7b8494" stroke-width="2.2"><path d="M1 1l4 4 4-4"/></svg>
<svg style="position:absolute;left:866px;top:296px" width="90" height="90" viewBox="0 0 90 90">
<path d="M26 61 L66 61 L80 86 L11 86z" fill="#dcbb82"/>
<path d="M36 62 L44 78 M56 62 L49 78 M20 72 L30 86 M70 72 L62 86" stroke="#cfa96c" stroke-width="0.8" fill="none"/>
<path d="M46 9 C31 9 22 19 20 31 C19 39 15 46 11 55 C8 63 12 69 19 69 L72 69 C79 69 80 62 77 55 C73 46 72 39 71 31 C69 19 61 9 46 9z" fill="#4e4036"/>
<path d="M32 60 L60 60 L62 70 L30 70z" fill="#dcbb82"/>
<path d="M36 62 L44 78 M56 62 L49 78" stroke="#cfa96c" stroke-width="0.8" fill="none"/>
<path d="M43 58 L50 58 L47 79z" fill="#f6eedb"/>
<path d="M72 42 C76 44 78 48 78 51" stroke="#4e4036" stroke-width="1" fill="none"/>
<rect x="41" y="50" width="11" height="10" fill="#fbe5da"/>
<circle cx="29.5" cy="41.5" r="3.2" fill="#f8d9cf"/><circle cx="63.5" cy="41.5" r="3.2" fill="#f8d9cf"/>
<ellipse cx="46.5" cy="43" rx="16" ry="14.5" fill="#fde9e1"/>
<path d="M29 38 C29 25 37 21 46 21 C56 21 64 26 64 38 C61 32 57 28 52 27 C50 30 46 32 41 31 C37 33 33 35 29 38z" fill="#4e4036"/>
<circle cx="38" cy="40.5" r="1.4" fill="#1a1a1a"/><circle cx="54.5" cy="40.5" r="1.4" fill="#1a1a1a"/>
<circle cx="37.5" cy="46.5" r="3.4" fill="#f6b4b4"/><circle cx="55.5" cy="46.5" r="3.4" fill="#f6b4b4"/>
<path d="M43.3 47 h6.6 a3.3 3.6 0 0 1 -6.6 0z" fill="#d9584d"/>
</svg>
<svg style="position:absolute;left:866px;top:565px" width="92" height="92" viewBox="0 0 92 92">
<defs><clipPath id="cc"><circle cx="46.1" cy="45.6" r="42"/></clipPath></defs>
<circle cx="46.1" cy="45.6" r="42" fill="#e96c47"/>
<g clip-path="url(#cc)">
<path d="M18 92 Q20 72 34 68 L58 68 Q72 72 74 92z" fill="#c8d7e6"/>
<path d="M38 67 L46 76 L54 67z" fill="#e4edf6"/>
<path d="M44.3 70 h3.8 l1 18 h-5.8z" fill="#151a22"/>
<path d="M31.6 72 v14 M60.3 72 v14" stroke="#3b4654" stroke-width="1.4"/>
<rect x="40.7" y="58" width="11" height="11" fill="#e9bb92"/>
<path d="M27 34 C27 17 35 9 45.7 9 C56 9 64.3 17 64.3 34 L64.3 44 C64.3 56 56 63.8 45.7 63.8 C35.5 63.8 27 56 27 44z" fill="#553b2f"/>
<path d="M27.5 31 L57 22 L64 30 L64 43 C60 40 52 41 46 44 C40 41 32 40 27.5 43z" fill="#eec39b"/>
<ellipse cx="45.7" cy="49.6" rx="4.5" ry="1.5" fill="#eec39b"/>
<path d="M30 30.5 h14 v6 c0 3-2 4.5-4 4.5 h-6 c-2.5 0-4-1.5-4-4.5z M48.2 30.5 h14 v6 c0 3-1.5 4.5-4 4.5 h-6 c-2 0-4-1.5-4-4.5z" fill="none" stroke="#1c1c1c" stroke-width="1.1"/>
<path d="M44 31.5 h4.2" stroke="#1c1c1c" stroke-width="1.1"/>
</g></svg>
<svg style="position:absolute;left:872px;top:810px" width="80" height="90" viewBox="0 0 80 90">
<path d="M28 74 L52 74 L53 84 L28 84z" fill="#8e7765"/>
<path d="M40 7 C27 7 21 17 20 28 C19 36 21 44 20 48 L26 50 L54 50 L60 48 C59 42 60 36 59 28 C58 17 52 7 40 7z" fill="#7b4c37"/>
<path d="M22 74 C21 60 22 48 30 45 L50 45 C58 48 59 60 58 74z" fill="#f1f0ee"/>
<rect x="37" y="38" width="7" height="8" fill="#f5d3c0"/>
<ellipse cx="40.7" cy="28.5" rx="12.3" ry="12" fill="#f7d9c8"/>
<path d="M28 25 C28 15 34 12 41 12 C48 12 53 16 53 25 C49 19 44 17 38 18 C34 19 30 21 28 25z" fill="#7b4c37"/>
<rect x="27.5" y="25.5" width="14.5" height="9" rx="3.5" fill="#f4dcd0" stroke="#333" stroke-width="1.6"/>
<rect x="43.5" y="25.5" width="10.5" height="9" rx="3.5" fill="#f4dcd0" stroke="#333" stroke-width="1.6"/>
<path d="M25 54 L46 54 L49.5 76 L31 76z" fill="#5a5558"/>
<ellipse cx="29.5" cy="68" rx="3.6" ry="3" fill="#f3c9b4"/><ellipse cx="46.5" cy="68" rx="3.6" ry="3" fill="#f3c9b4"/>
<ellipse cx="25" cy="72" rx="2.6" ry="2.4" fill="#f3c9b4"/><ellipse cx="54" cy="72" rx="2.6" ry="2.4" fill="#f3c9b4"/>
</svg>
<div style="position:absolute;left:1901px;top:0px;width:15px;height:912px;background:#f8f8f8"></div>
<svg style="position:absolute;left:1904px;top:7px" width="12" height="10" viewBox="0 0 12 10" fill="#8a8a8a"><path d="M6 0L12 9H0z"/></svg>
<div style="position:absolute;left:1905px;top:24px;width:11px;height:343px;background:#8c8c8c;border-radius:6px"></div>
<svg style="position:absolute;left:1904px;top:898px" width="12" height="10" viewBox="0 0 12 10" fill="#8a8a8a"><path d="M0 0h12L6 9z"/></svg>
<div style="position:absolute;left:0px;top:912px;width:1916px;height:1px;background:#c9bda9"></div>
<div style="position:absolute;left:0px;top:913px;width:1916px;height:3px;background:#f1e3c6"></div>
</body></html>
